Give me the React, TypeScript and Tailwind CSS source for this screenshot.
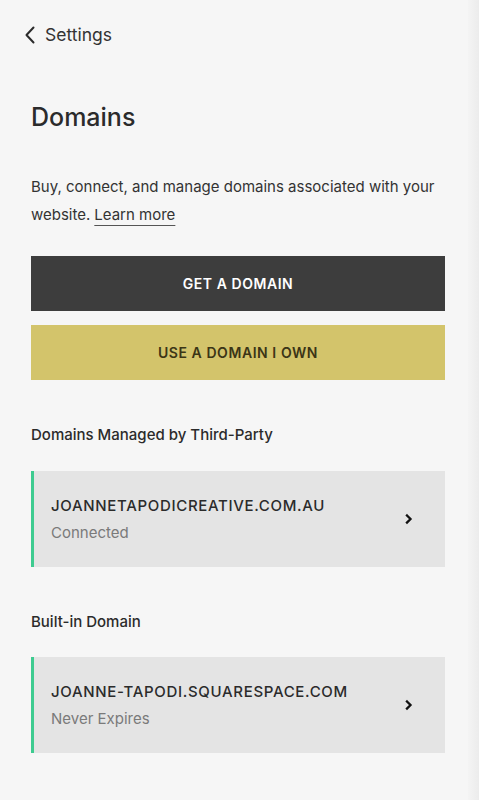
import React from "react";

function Chevron() {
  return (
    <svg width="10" height="12" viewBox="0 0 10 12" fill="none">
      <path d="M3 2.5 L6.5 6 L3 9.5" stroke="#111" strokeWidth="2.3" strokeLinecap="square" strokeLinejoin="miter" />
    </svg>
  );
}

function DomainCard({ name, status }: { name: string; status: string }) {
  return (
    <div className="flex h-[96px] items-center border-l-[3px] border-[#3ecb90] bg-[#e4e4e4] pl-[17px] pr-[31px]">
      <div className="flex flex-1 flex-col gap-[5px]">
        <div className="text-[15px] font-medium uppercase leading-[22px] tracking-[0.045em] text-[#2b2b2b]">{name}</div>
        <div className="text-[15px] leading-[22px] text-[#7a7a7a]">{status}</div>
      </div>
      <Chevron />
    </div>
  );
}

export default function App() {
  return (
    <div
      className="flex min-h-[800px] w-full bg-[#f6f6f6] text-[#2b2b2b]"
      style={{ fontFamily: "Inter, 'Noto Sans', Arial, sans-serif" }}
    >
      <div className="flex-1 pl-[31px] pr-[23px]">
        <div className="flex items-center gap-[8px] pt-[24px] -ml-[8px]">
          <svg width="14" height="20" viewBox="0 0 14 20" fill="none">
            <path d="M10.5 2.5 L3.5 10 L10.5 17.5" stroke="#2b2b2b" strokeWidth="2" strokeLinecap="round" strokeLinejoin="round" />
          </svg>
          <span className="text-[17.5px] leading-[22px] text-[#333]">Settings</span>
        </div>

        <h1 className="mt-[55px] text-[25px] font-medium leading-[32px] text-[#2b2b2b]">Domains</h1>

        <div className="mt-[40px] flex flex-col text-[15px] leading-[28px] text-[#333]">
          <span>Buy, connect, and manage domains associated with your</span>
          <div className="flex gap-[4px]">
            <span>website.</span>
            <span className="underline decoration-[#555] decoration-1 underline-offset-[5px]">Learn more</span>
          </div>
        </div>

        <div className="mt-[27px] flex h-[55px] items-center justify-center bg-[#3d3d3d] text-[14px] font-semibold uppercase tracking-[0.04em] text-white">
          Get a domain
        </div>
        <div className="mt-[14px] flex h-[55px] items-center justify-center bg-[#d3c46b] text-[14px] font-semibold uppercase tracking-[0.04em] text-[#3b3516]">
          Use a domain I own
        </div>

        <div className="mt-[44px] text-[15px] font-medium leading-[22px] text-[#2b2b2b]">Domains Managed by Third-Party</div>
        <div className="mt-[25px]">
          <DomainCard name="joannetapodicreative.com.au" status="Connected" />
        </div>

        <div className="mt-[44px] text-[15px] font-medium leading-[22px] text-[#2b2b2b]">Built-in Domain</div>
        <div className="mt-[24px]">
          <DomainCard name="joanne-tapodi.squarespace.com" status="Never Expires" />
        </div>
      </div>
      <div className="w-[11px] bg-gradient-to-r from-[#f4f4f4] to-[#ececec]" />
    </div>
  );
}
